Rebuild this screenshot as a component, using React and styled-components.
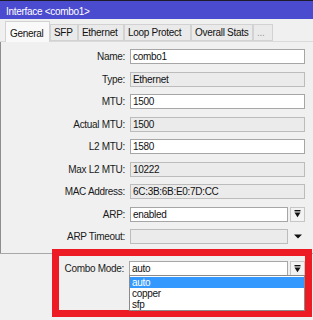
import React from "react";
import styled, { createGlobalStyle } from "styled-components";

const Global = createGlobalStyle`
  html, body { margin: 0; padding: 0; background: #f0f0f0; }
  body { font-family: "Liberation Sans", Arial, sans-serif; }
  * { box-sizing: border-box; }
`;

const Window = styled.div`
  position: relative;
  width: 313px;
  height: 320px;
  overflow: hidden;
  background: #f0f0f0;
  font-family: "Liberation Sans", Arial, sans-serif;
  font-size: 10px;
  letter-spacing: -0.3px;
  color: #111;
`;

const TitleBar = styled.div`
  height: 19px;
  border-top: 1px solid #1c1c2a;
  background: #4b4bcf;
  color: #fff;
  padding: 2px 0 0 6px;
  display: flex;
  align-items: center;
`;

const TabStrip = styled.div`
  height: 23px;
  display: flex;
  align-items: flex-end;
  padding-left: 5px;
  border-bottom: 1px solid #dadada;
`;

const Tab = styled.div`
  width: ${(p) => p.$w}px;
  height: ${(p) => (p.$active ? 21 : 17)}px;
  margin-bottom: ${(p) => (p.$active ? -1 : 0)}px;
  padding-left: ${(p) => (p.$active ? 4 : 3)}px;
  padding-top: ${(p) => (p.$active ? 3 : 0)}px;
  display: flex;
  align-items: center;
  background: ${(p) => (p.$active ? "#f9f9f9" : "#eaeaea")};
  border: 1px solid #d2d2d2;
  border-bottom: ${(p) => (p.$active ? "none" : "1px solid #d2d2d2")};
  color: ${(p) => (p.$muted ? "#9a9a9a" : "#111")};
  white-space: nowrap;
  & + & { margin-left: 0; }
`;

const Panel = styled.div`
  border-left: 1px solid #8e8e8e;
  padding: 7px 8px 9px 0;
`;

const Form = styled.div`
  display: grid;
  grid-template-columns: 124px 1fr;
  column-gap: 5px;
  row-gap: 7.5px;
  align-items: center;
`;

const Label = styled.div`
  text-align: right;
  white-space: nowrap;
  color: #1a1a1a;
  line-height: 15px;
`;

const Input = styled.div`
  flex: 1;
  height: 15px;
  border: 1px solid ${(p) => (p.$disabled ? "#bcbcbc" : "#a6a6a6")};
  background: ${(p) => (p.$disabled ? "#ebebeb" : "#ffffff")};
  padding-left: 2px;
  line-height: 13px;
  white-space: nowrap;
  overflow: hidden;
  color: #111;
`;

const Field = styled.div`
  position: relative;
  display: flex;
  gap: 2px;
`;

const DropButton = styled.div`
  width: 15px;
  height: 15px;
  border: 1px solid ${(p) => (p.$plain ? "transparent" : "#c6c6c6")};
  background: ${(p) => (p.$plain ? "transparent" : "#f3f3f3")};
  display: flex;
  align-items: center;
  justify-content: center;
`;

const Separator = styled.div`
  height: 1px;
  background: #a8a8a8;
`;

const ComboSection = styled.div`
  padding: 7px 8px 0 0;
`;

const List = styled.div`
  position: absolute;
  top: 14px;
  left: 0;
  right: 0;
  z-index: 2;
  background: #fff;
  border: 1px solid #8a8a8a;
  padding-top: 1px;
`;

const Item = styled.div`
  height: 11px;
  line-height: 11px;
  padding-left: 2px;
  background: ${(p) => (p.$selected ? "#3399ff" : "transparent")};
  color: ${(p) => (p.$selected ? "#fff" : "#111")};
`;

const Highlight = styled.div`
  position: absolute;
  left: 52px;
  top: 249px;
  width: 260px;
  height: 68px;
  border: 7px solid #ed1c24;
  z-index: 1;
  pointer-events: none;
`;

const PickIcon = () => (
  <svg width="7" height="8" viewBox="0 0 7 8">
    <rect x="0.5" y="0" width="6" height="1.4" fill="#111" />
    <path d="M0.5 2.6 H6.5 L3.5 7.2 Z" fill="#111" />
  </svg>
);

const DownIcon = () => (
  <svg width="8" height="5" viewBox="0 0 8 5">
    <path d="M0 0.5 H8 L4 4.5 Z" fill="#111" />
  </svg>
);

const tabs = [
  { label: "General", w: 45, active: true },
  { label: "SFP", w: 28 },
  { label: "Ethernet", w: 46 },
  { label: "Loop Protect", w: 67 },
  { label: "Overall Stats", w: 62 },
  { label: "...", w: 20, muted: true },
];

const rows = [
  { label: "Name:", value: "combo1" },
  { label: "Type:", value: "Ethernet", disabled: true },
  { label: "MTU:", value: "1500" },
  { label: "Actual MTU:", value: "1500", disabled: true },
  { label: "L2 MTU:", value: "1580" },
  { label: "Max L2 MTU:", value: "10222", disabled: true },
  { label: "MAC Address:", value: "6C:3B:6B:E0:7D:CC", disabled: true },
  { label: "ARP:", value: "enabled", button: "pick" },
  { label: "ARP Timeout:", value: "", disabled: true, button: "down" },
];

export default function App() {
  return (
    <>
      <Global />
      <Window>
        <TitleBar>Interface &lt;combo1&gt;</TitleBar>
        <TabStrip>
          {tabs.map((t) => (
            <Tab key={t.label} $w={t.w} $active={t.active} $muted={t.muted}>
              {t.label}
            </Tab>
          ))}
        </TabStrip>
        <Panel>
          <Form>
            {rows.map((r) => (
              <React.Fragment key={r.label}>
                <Label>{r.label}</Label>
                <Field>
                  <Input $disabled={r.disabled}>{r.value}</Input>
                  {r.button === "pick" && (
                    <DropButton>
                      <PickIcon />
                    </DropButton>
                  )}
                  {r.button === "down" && (
                    <DropButton $plain>
                      <DownIcon />
                    </DropButton>
                  )}
                </Field>
              </React.Fragment>
            ))}
          </Form>
        </Panel>
        <Separator />
        <ComboSection>
          <Form>
            <Label>Combo Mode:</Label>
            <Field>
              <Input>auto</Input>
              <DropButton>
                <PickIcon />
              </DropButton>
              <List>
                <Item $selected>auto</Item>
                <Item>copper</Item>
                <Item>sfp</Item>
              </List>
            </Field>
          </Form>
        </ComboSection>
        <Highlight />
      </Window>
    </>
  );
}
